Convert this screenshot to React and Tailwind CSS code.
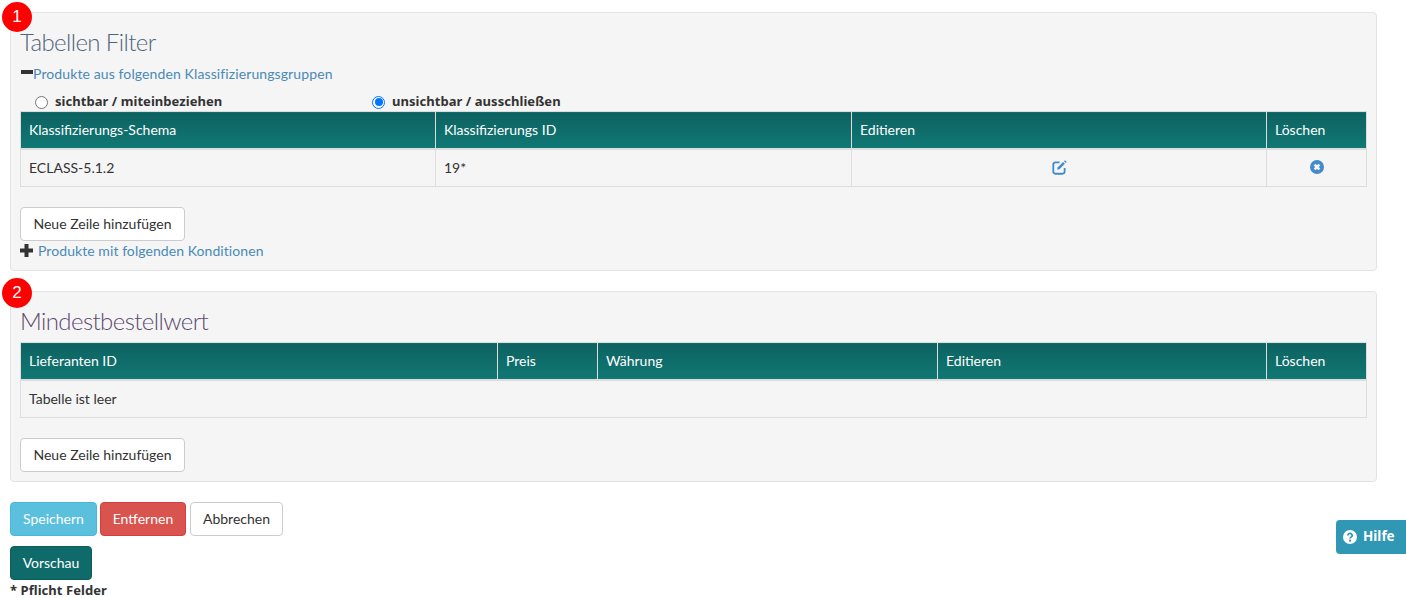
import React from "react";

const Th = ({ w, children }) => (
  <th className={`${w} h-[37px] border border-[#dddddd] border-b-2 px-2 pb-px text-left font-normal text-[14px] text-white bg-gradient-to-b from-[#0d6260] to-[#107875]`}>
    {children}
  </th>
);
const Td = ({ children, center, colSpan }) => (
  <td colSpan={colSpan} className={`h-[38px] border border-[#dddddd] px-2 pb-px text-[14px] text-[#333333] ${center ? "text-center" : ""}`}>
    {children}
  </td>
);
const Badge = ({ n, top }) => (
  <div className={`absolute -left-[9px] ${top} z-10 flex h-[30px] w-[30px] items-center justify-center rounded-full bg-[#ff0000] text-[17px] text-white [font-family:'Liberation_Sans',sans-serif]`}>{n}</div>
);
const AddBtn = () => (
  <button className="block h-[34px] w-[165px] rounded border border-[#cccccc] bg-white pb-[2px] text-center text-[14px] text-[#333333]">Neue Zeile hinzufügen</button>
);
const Btn = ({ className, children }) => (
  <button className={`h-[34px] rounded border pb-px text-[14px] ${className}`}>{children}</button>
);

const EditIcon = () => (
  <svg width="15" height="15" viewBox="0 0 14 14" className="mx-auto block" fill="none">
    <path d="M7 2.2H3.2A2 2 0 0 0 1.2 4.2v6.6a2 2 0 0 0 2 2h6.6a2 2 0 0 0 2-2V7.4" stroke="#428bca" strokeWidth="1.7" />
    <path d="M5.2 6.9 10.4 1.9 12 3.5 6.9 8.6 4.9 9.1Z" fill="#428bca" />
    <path d="M11.2 1.1 12.1.3 13.7 1.9 12.8 2.8Z" fill="#428bca" />
  </svg>
);
const CloseIcon = () => (
  <svg width="14" height="14" viewBox="0 0 14 14" className="mx-auto block">
    <circle cx="7" cy="7" r="7" fill="#428bca" />
    <path d="M4.6 4.6 9.4 9.4M9.4 4.6 4.6 9.4" stroke="#f5f5f5" strokeWidth="2.6" />
  </svg>
);
const Radio = ({ checked }) =>
  checked ? (
    <span className="box-border block h-[13px] w-[13px] rounded-full border-[1.5px] border-[#0075ff] bg-white p-[1.5px]">
      <span className="block h-full w-full rounded-full bg-[#0075ff]" />
    </span>
  ) : (
    <span className="box-border block h-[13px] w-[13px] rounded-full border border-[#767676] bg-white" />
  );

export default function App() {
  return (
    <div className="h-[598px] overflow-hidden bg-white pl-[10px] pr-[29px] pt-[12px] text-[14px] text-[#333333] [font-family:'Lato','Noto_Sans',sans-serif]">
      <section className="relative h-[259px] rounded border border-[#e3e3e3] bg-[#f5f5f5] px-[9px]">
        <Badge n="1" top="-top-[11px]" />
        <h2 className="mt-[12px] h-[33px] text-[24px] font-light leading-[33px] tracking-[-0.6px] text-[#4f6478]">Tabellen Filter</h2>
        <div className="mt-[5px] flex h-[20px] items-center">
          <span className="ml-[1px] h-[4px] w-[12px] translate-y-[-1px] bg-[#333333]" />
          <a className="tracking-[0.11px] text-[#4a8ab5]">Produkte aus folgenden Klassifizierungsgruppen</a>
        </div>
        <div className="mt-[10px] flex h-[18px] items-center pl-[15px] text-[13px] font-bold tracking-[0.05px] [font-family:'Noto_Sans',sans-serif]">
          <div className="flex w-[337px] items-center gap-[7px]"><Radio /><span>sichtbar / miteinbeziehen</span></div>
          <div className="flex items-center gap-[7px]"><Radio checked /><span>unsichtbar / ausschließen</span></div>
        </div>
        <table className="w-[1346px] table-fixed border-collapse">
          <thead>
            <tr>
              <Th w="w-[415px]">Klassifizierungs-Schema</Th>
              <Th w="w-[416px]">Klassifizierungs ID</Th>
              <Th w="w-[415px]">Editieren</Th>
              <Th w="w-[100px]">Löschen</Th>
            </tr>
          </thead>
          <tbody>
            <tr>
              <Td>ECLASS-5.1.2</Td>
              <Td>19*</Td>
              <Td center><EditIcon /></Td>
              <Td center><CloseIcon /></Td>
            </tr>
          </tbody>
        </table>
        <div className="mt-[20px]"><AddBtn /></div>
        <div className="flex h-[18px] items-center gap-[5px]">
          <svg width="13" height="13" viewBox="0 0 13 13"><path d="M4.5 0h4v4.5H13v4H8.5V13h-4V8.5H0v-4h4.5Z" fill="#333333" /></svg>
          <a className="tracking-[0.07px] text-[#4a8ab5]">Produkte mit folgenden Konditionen</a>
        </div>
      </section>

      <section className="relative mt-[20px] h-[191px] rounded border border-[#e3e3e3] bg-[#f5f5f5] px-[9px]">
        <Badge n="2" top="-top-[14px]" />
        <h2 className="mt-[12px] h-[33px] text-[24px] font-light leading-[33px] tracking-[-0.6px] text-[#5c4a6e]">Mindestbestellwert</h2>
        <table className="mt-[5px] w-[1346px] table-fixed border-collapse">
          <thead>
            <tr>
              <Th w="w-[477px]">Lieferanten ID</Th>
              <Th w="w-[100px]">Preis</Th>
              <Th w="w-[340px]">Währung</Th>
              <Th w="w-[329px]">Editieren</Th>
              <Th w="w-[100px]">Löschen</Th>
            </tr>
          </thead>
          <tbody>
            <tr><Td colSpan={5}>Tabelle ist leer</Td></tr>
          </tbody>
        </table>
        <div className="mt-[20px]"><AddBtn /></div>
      </section>

      <div className="mt-[20px] flex gap-[3px]">
        <Btn className="w-[87px] border-[#46b8da] bg-[#5bc0de] text-white">Speichern</Btn>
        <Btn className="w-[86px] border-[#d43f3a] bg-[#d9534f] text-white">Entfernen</Btn>
        <Btn className="ml-[1px] w-[93px] border-[#cccccc] bg-white text-[#333333]">Abbrechen</Btn>
      </div>
      <Btn className="mt-[10px] block w-[82px] border-[#0b5d5b] bg-[#0f6b69] text-white">Vorschau</Btn>
      <p className="mt-px h-[18px] text-[13px] font-bold leading-[18px] tracking-[0.05px] [font-family:'Noto_Sans',sans-serif]">* Pflicht Felder</p>

      <div className="absolute left-[1336px] top-[520px] flex h-[34px] w-[70px] items-center gap-[6px] rounded-l bg-[#3097b4] pb-px pl-[7px] text-[13.5px] font-bold text-white [font-family:'Noto_Sans',sans-serif]">
        <svg width="14" height="14" viewBox="0 0 14 14">
          <circle cx="7" cy="7" r="7" fill="#fff" />
          <path d="M4.8 5.4a2.2 2 0 1 1 3.4 1.7c-.8.5-1.1.8-1.1 1.5" fill="none" stroke="#3097b4" strokeWidth="1.7" />
          <rect x="6.1" y="9.6" width="2" height="2" fill="#3097b4" />
        </svg>
        Hilfe
      </div>
    </div>
  );
}
